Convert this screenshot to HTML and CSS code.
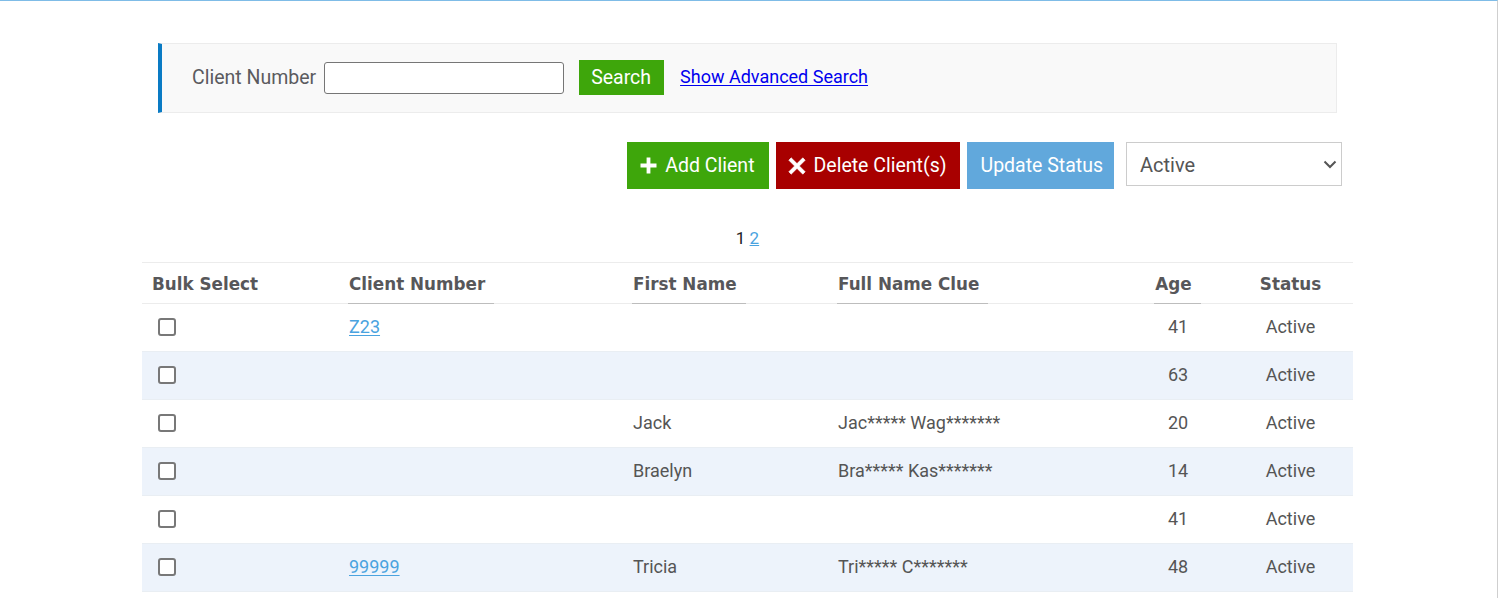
FILE: index.html
```html
<!DOCTYPE html>
<html lang="en">
<head>
<meta charset="utf-8">
<title>Clients</title>
<link rel="stylesheet" href="styles.css">
</head>
<body>
<div class="page">
  <div class="container">
    <div class="search-panel">
      <label class="search-label" for="cn">Client Number</label>
      <input class="search-input" id="cn" type="text">
      <button class="btn btn-search">Search</button>
      <a class="adv-link" href="#">Show Advanced Search</a>
    </div>

    <div class="toolbar">
      <button class="btn btn-big btn-add">
        <svg class="ico" width="17" height="17" viewBox="0 0 17 17"><path d="M6.6 0.5h3.8v6.1h6.1v3.8h-6.1v6.1h-3.8v-6.1h-6.1v-3.8h6.1z" fill="#fff"/></svg>
        <span>Add Client</span>
      </button>
      <button class="btn btn-big btn-del">
        <svg class="ico" width="18" height="18" viewBox="0 0 18 18"><path d="M3.2 0.8L9 6.6l5.8-5.8 2.4 2.4-5.8 5.8 5.8 5.8-2.4 2.4-5.8-5.8-5.8 5.8-2.4-2.4 5.8-5.8-5.8-5.8z" fill="#fff" stroke="#fff" stroke-width="0.6" stroke-linejoin="round"/></svg>
        <span>Delete Client(s)</span>
      </button>
      <button class="btn btn-big btn-upd">Update Status</button>
      <div class="select-wrap">
        <select class="status-select">
          <option>Active</option>
          <option>Inactive</option>
        </select>
        <svg class="chev" width="14" height="9" viewBox="0 0 14 9"><path d="M1.5 1.5l5.5 5.5 5.5-5.5" fill="none" stroke="#555" stroke-width="2"/></svg>
      </div>
    </div>

    <div class="pager"><span class="cur">1</span> <a href="#">2</a></div>

    <table class="grid">
      <colgroup>
        <col style="width:197px"><col style="width:284px"><col style="width:205px"><col style="width:300px"><col style="width:100px"><col style="width:125px">
      </colgroup>
      <thead>
        <tr>
          <th>Bulk Select</th>
          <th><span class="sort">Client Number</span></th>
          <th><span class="sort">First Name</span></th>
          <th><span class="sort">Full Name Clue</span></th>
          <th class="c"><span class="sort">Age</span></th>
          <th class="c">Status</th>
        </tr>
      </thead>
      <tbody>
        <tr><td><input class="cb" type="checkbox"></td><td><a href="#">Z23</a></td><td></td><td></td><td class="c">41</td><td class="c">Active</td></tr>
        <tr><td><input class="cb" type="checkbox"></td><td></td><td></td><td></td><td class="c">63</td><td class="c">Active</td></tr>
        <tr><td><input class="cb" type="checkbox"></td><td></td><td>Jack</td><td>Jac***** Wag*******</td><td class="c">20</td><td class="c">Active</td></tr>
        <tr><td><input class="cb" type="checkbox"></td><td></td><td>Braelyn</td><td>Bra***** Kas*******</td><td class="c">14</td><td class="c">Active</td></tr>
        <tr><td><input class="cb" type="checkbox"></td><td></td><td></td><td></td><td class="c">41</td><td class="c">Active</td></tr>
        <tr><td><input class="cb" type="checkbox"></td><td><a href="#">99999</a></td><td>Tricia</td><td>Tri***** C*******</td><td class="c">48</td><td class="c">Active</td></tr>
      </tbody>
    </table>
  </div>
</div>
</body>
</html>
```
FILE: styles.css
```css
html, body {
  margin: 0;
  padding: 0;
  background: #fff;
}
body {
  font-family: Roboto, "Liberation Sans", sans-serif;
  color: #555;
  overflow: hidden;
}
.page {
  width: 1497px;
  height: 597px;
  border-top: 1px solid #7fbce7;
  border-right: 1px solid #cfcfcf;
}
.container {
  margin-left: 142px;
  width: 1211px;
  padding-top: 42px;
}

/* search panel */
.search-panel {
  margin: 0 16px;
  height: 70px;
  box-sizing: border-box;
  background: #f9f9f9;
  border: 1px solid #ececec;
  border-left: 4px solid #0a7bc4;
  padding: 16px 0 17px 30px;
  display: flex;
  align-items: center;
}
.search-label {
  font-size: 19.5px;
  color: #5b5b5f;
  margin-right: 8px;
  line-height: 22px;
}
.search-input {
  width: 240px;
  height: 32px;
  box-sizing: border-box;
  border: 1px solid #767676;
  border-radius: 3px;
  background: #fff;
  margin: 0 15px 0 0;
  padding: 2px 6px;
  font-size: 16px;
}
.btn {
  border: 0;
  margin: 0;
  color: #fff;
  font-family: Roboto, "Liberation Sans", sans-serif;
  cursor: pointer;
}
.btn-search {
  height: 35px;
  padding: 0 13px 0 12px;
  background: #3ea60b;
  font-size: 19.5px;
  margin-right: 16px;
}
.adv-link {
  color: #0000ee;
  font-size: 18px;
  line-height: 20px;
  margin-top: -2px;
  text-decoration: underline;
  text-underline-offset: 2px;
}

/* toolbar */
.toolbar {
  margin-top: 29px;
  padding-right: 11px;
  display: flex;
  justify-content: flex-end;
  align-items: flex-start;
  gap: 7px;
}
.btn-big {
  height: 47px;
  font-size: 19.5px;
  display: flex;
  align-items: center;
  gap: 8px;
  padding: 0 14px 0 13px;
}
.btn-add { background: #3ea60b; }
.btn-del { background: #a80000; padding-left: 12px; }
.btn-upd { background: #61a8dc; padding: 0 11px 0 13px; }
.ico { display: block; flex: none; }
.select-wrap {
  position: relative;
  margin-left: 5px;
  width: 216px;
  height: 44px;
}
.status-select {
  appearance: none;
  -webkit-appearance: none;
  width: 100%;
  height: 100%;
  box-sizing: border-box;
  border: 1px solid #cccccc;
  border-radius: 0;
  background: #fff;
  color: #555;
  font-family: Roboto, "Liberation Sans", sans-serif;
  font-size: 20px;
  padding: 2px 13px 0;
  margin: 0;
}
.chev {
  position: absolute;
  right: 5px;
  top: 18px;
  pointer-events: none;
}

/* pager */
.pager {
  margin: 39px 0 14px;
  text-align: center;
  font-size: 17px;
  line-height: 20px;
}
.pager .cur { color: #222; }
.pager a { color: #4aa3df; text-decoration: underline; }

/* table */
.grid {
  width: 1211px;
  table-layout: fixed;
  border-collapse: separate;
  border-spacing: 0;
}
.grid th {
  font-family: "DejaVu Sans", Verdana, sans-serif;
  font-weight: bold;
  font-size: 16.8px;
  color: #57575a;
  text-align: left;
  padding: 11px 10px 9px;
  line-height: 20px;
  height: 20px;
  border-top: 1px solid #ececec;
  border-bottom: 1px solid #ececec;
}
.grid .c { text-align: center; }
.sort {
  position: relative;
  display: inline-block;
  padding-right: 9px;
}
.sort::after {
  content: "";
  position: absolute;
  left: -1px;
  right: 0;
  bottom: -10px;
  height: 1px;
  background: #bdbdbd;
}
.grid td {
  font-size: 18px;
  height: 46px;
  padding: 0 10px 1px;
  line-height: 20px;
  border-bottom: 1px solid #e9eef3;
  color: #555;
  vertical-align: middle;
}
.grid tbody tr:nth-child(even) td { background: #edf3fb; }
.grid td a {
  color: #4aa3df;
  text-decoration: underline;
  text-underline-offset: 2px;
}
.cb {
  appearance: none;
  -webkit-appearance: none;
  display: block;
  width: 18px;
  height: 18px;
  margin: 0 0 0 6px;
  box-sizing: border-box;
  border: 2px solid #787878;
  border-radius: 3px;
  background: #fff;
}
```
